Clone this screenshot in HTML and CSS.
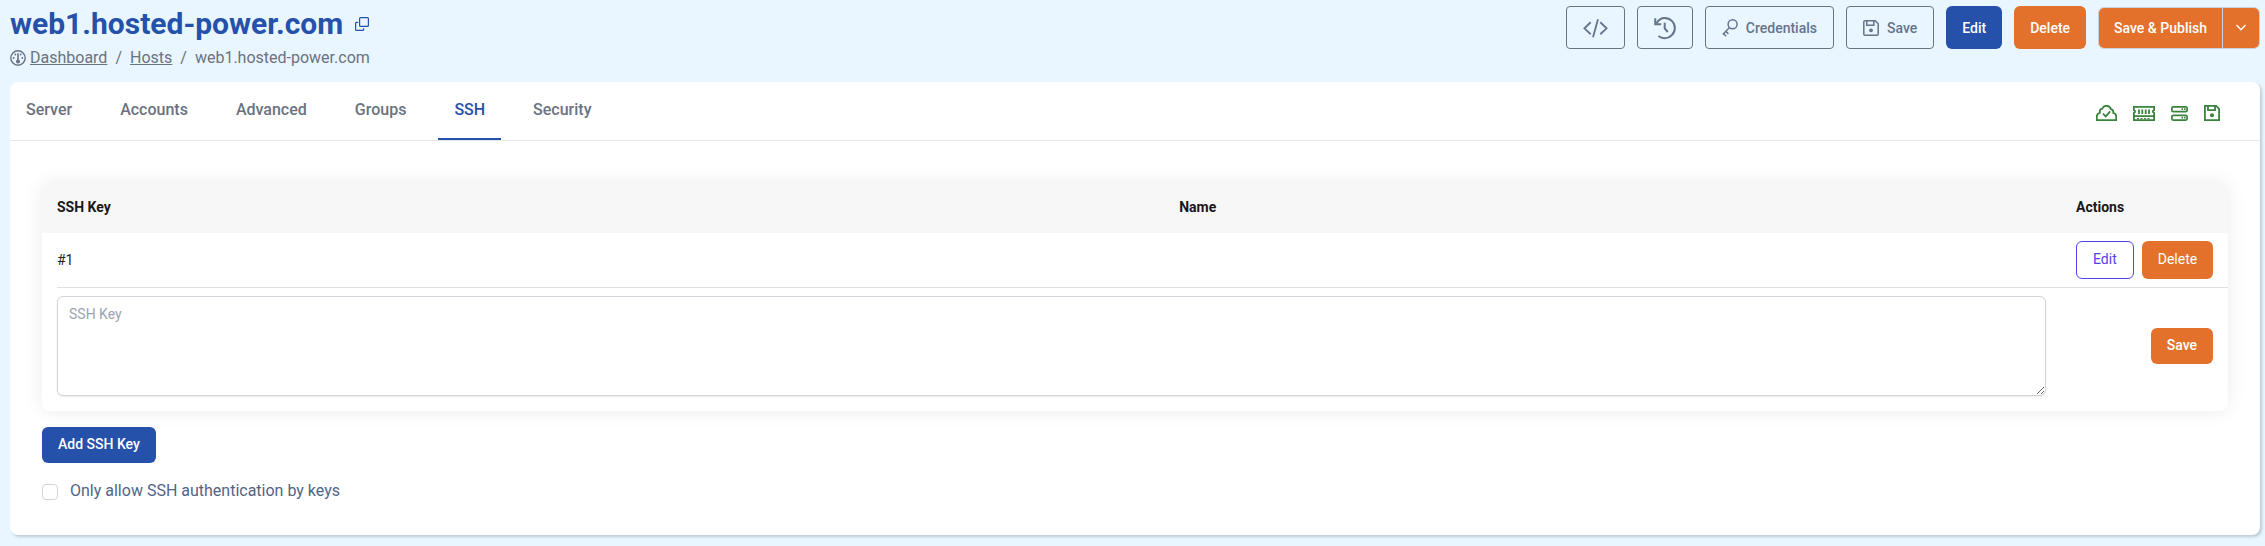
FILE: index.html
```html
<!DOCTYPE html>
<html lang="en">
<head>
<meta charset="utf-8">
<title>web1.hosted-power.com</title>
<link rel="stylesheet" href="styles.css">
</head>
<body>
<header class="page-head">
  <div class="heading">
    <div class="title-row">
      <h1>web1.hosted-power.com</h1>
      <button class="copy" type="button" aria-label="Copy host name">
        <svg width="14" height="14" viewBox="0 0 14 14" fill="none" stroke="currentColor" stroke-width="1.2"><rect x="4.6" y=".6" width="8.8" height="8.8" rx="1"/><path d="M3.200 5.400H1.600a1 1 0 0 0-1 1v6a1 1 0 0 0 1 1h6a1 1 0 0 0 1-1v-1.200"/></svg>
      </button>
    </div>
    <nav class="crumbs" aria-label="Breadcrumb">
      <svg width="16" height="16" viewBox="0 0 16 16" fill="none" stroke="currentColor" stroke-width="1.400"><circle cx="8" cy="8" r="7.200"/><path d="M8 3.200v8" stroke-width="1.600"/><circle cx="8" cy="11.400" r="1.300" fill="currentColor"/><g fill="currentColor" stroke="none"><circle cx="5.300" cy="4.500" r=".9"/><circle cx="10.700" cy="4.500" r=".9"/><circle cx="3.700" cy="8" r=".9"/><circle cx="12.300" cy="8" r=".9"/></g></svg>
      <a href="#">Dashboard</a><span class="sep">/</span><a href="#">Hosts</a><span class="sep">/</span><span>web1.hosted-power.com</span>
    </nav>
  </div>
  <div class="toolbar">
    <button class="btn tall outline" type="button" aria-label="Code">
      <svg width="25" height="20" viewBox="0 0 26 20" fill="none" stroke="currentColor" stroke-width="1.900"><path d="M8 4 1.500 10.300 8 16.500M18 4l6.500 6.300L18 16.500M15.600 1 10.400 19.500"/></svg>
    </button>
    <button class="btn tall outline" type="button" aria-label="History">
      <svg width="22" height="24" viewBox="0 0 23 24" fill="none" stroke="currentColor" stroke-width="2.100"><path d="M2.500 7.200C5 3 8 1.500 11 1.500c6 0 10.800 4.700 10.800 10.500S17 22.600 11 22.600c-2.500 0-4.600-.8-6.400-2.200"/><path d="M1.300 1.800V8h6.200M11.200 6.500v6l3.200 3.700"/></svg>
    </button>
    <button class="btn tall outline" type="button">
      <svg width="16" height="18" viewBox="0 0 16 18" fill="none" stroke="currentColor" stroke-width="1.500"><circle cx="10.600" cy="5.300" r="4.500"/><path d="M7.500 8.600.8 15.500M1.200 14.200l2.900 3M3.700 12.200l2.700 2.700"/></svg>
      Credentials
    </button>
    <button class="btn tall outline" type="button">
      <svg width="16" height="16" viewBox="0 0 16 16" fill="none" stroke="currentColor" stroke-width="1.500"><path d="M2 .8h10.200l3 3V14a1.200 1.200 0 0 1-1.200 1.200H2A1.200 1.200 0 0 1 .8 14V2A1.200 1.200 0 0 1 2 .8zM3.800.8v4.400h7V.8"/><circle cx="8" cy="10.300" r="1.900" fill="currentColor" stroke="none"/></svg>
      Save
    </button>
    <button class="btn tall blue" type="button">Edit</button>
    <button class="btn tall orange" type="button">Delete</button>
    <div class="split">
      <button class="btn orange" type="button">Save &amp; Publish</button>
      <button class="btn orange more" type="button" aria-label="More publish options">
        <svg width="10" height="7" viewBox="0 0 10 7" fill="none" stroke="currentColor" stroke-width="1.400"><path d="M.5 1 5 5.700 9.500 1"/></svg>
      </button>
    </div>
  </div>
</header>
<main class="card">
  <div class="tabbar">
    <nav class="tabs">
      <a href="#">Server</a><a href="#">Accounts</a><a href="#">Advanced</a><a href="#">Groups</a><a href="#" class="active" aria-current="page">SSH</a><a href="#">Security</a>
    </nav>
    <div class="status">
      <svg width="21" height="16" viewBox="0 0 21 16" fill="none" stroke="currentColor" stroke-width="1.800"><path d="M.8 15.200v-3.700c0-2 1.200-3.300 3-3.700C3.500 5.400 4.500 4 6.300 3.700 7 1.800 8.500.8 10.500.8c2.300 0 3.700 1.300 4.300 3.300 1.800.3 2.700 1.600 2.500 3.700 1.900.4 2.900 1.700 2.900 3.700v3.700z"/><path d="m7 8.700 2.700 2.700 4.500-5"/></svg>
      <svg width="22" height="15" viewBox="0 0 22 15" fill="none" stroke="currentColor" stroke-width="1.800"><path d="M.9.900h20.200v3.300c-1.600.4-1.600 2.400 0 2.800v7.100H.9V7c1.600-.4 1.600-2.400 0-2.800zM.8 10.200h20.400M6 3.500v4.500M9.300 3.500v4.500M12.700 3.500v4.500M16 3.500v4.500"/><path d="M4 12.600h14" stroke-dasharray="2 1.500" stroke-width="1.200"/></svg>
      <svg width="17" height="15" viewBox="0 0 17 15" fill="none" stroke="currentColor" stroke-width="1.700"><rect x=".9" y=".9" width="15.200" height="4.800" rx="1.300"/><rect x=".9" y="9.300" width="15.200" height="4.800" rx="1.300"/><path d="M10.500 3.200H12M13 3.200h1.500M10.500 11.700H12M13 11.700h1.500"/></svg>
      <svg width="16" height="16" viewBox="0 0 16 16" fill="none" stroke="currentColor" stroke-width="1.800"><path d="M.9.900h11.300l2.900 2.900v11.300H.9zM4 .8v4.400h7V.8"/><circle cx="8" cy="10.200" r="2" fill="currentColor" stroke="none"/></svg>
    </div>
  </div>
  <div class="content">
    <div class="panel">
      <table>
        <colgroup><col class="c-key"><col><col class="c-act"></colgroup>
        <thead><tr><th scope="col">SSH Key</th><th scope="col">Name</th><th scope="col">Actions</th></tr></thead>
        <tbody>
          <tr>
            <td>#1</td><td></td>
            <td><div class="actions"><button class="btn mid ghost" type="button">Edit</button><button class="btn mid orange" type="button">Delete</button></div></td>
          </tr>
          <tr class="form-row">
            <td colspan="2"><textarea placeholder="SSH Key" aria-label="SSH Key"></textarea></td>
            <td><div class="actions end"><button class="btn orange" type="button">Save</button></div></td>
          </tr>
        </tbody>
      </table>
    </div>
    <button class="btn blue" type="button">Add SSH Key</button>
    <div class="check"><input type="checkbox" id="keys-only"><label for="keys-only">Only allow SSH authentication by keys</label></div>
  </div>
</main>
</body>
</html>
```
FILE: styles.css
```css
* { box-sizing: border-box; }
body {
  margin: 0;
  padding: 6px 5px 11px 10px;
  background: #e9f6ff;
  color: #212529;
  font: 14px/20px Roboto, "Liberation Sans", sans-serif;
}
button, textarea { font: inherit; }
svg { display: block; flex: none; }

.page-head { display: flex; justify-content: space-between; align-items: flex-start; }
.title-row { display: flex; align-items: center; gap: 12px; height: 36px; }
h1 { margin: 0; font-size: 30px; line-height: 36px; font-weight: 700; color: #2551ab; }
.copy { border: 0; padding: 0; background: none; color: #2551ab; }
.crumbs { display: flex; align-items: center; height: 20px; margin-top: 6px; font-size: 16px; color: #6b7280; }
.crumbs svg { margin-right: 4px; }
.crumbs a { color: inherit; text-decoration: underline; }
.sep { margin: 0 8px; }

.toolbar { display: flex; align-items: center; gap: 12px; }
.btn {
  display: inline-flex; align-items: center; justify-content: center; gap: 8px;
  height: 36px; padding: 0 16px 2px;
  border: 0; border-radius: 6px;
  font-size: 14px; line-height: 20px; font-weight: 500;
  white-space: nowrap; cursor: pointer;
}
.tall { height: 43px; padding-bottom: 0; }
.mid { height: 38px; font-weight: 400; }
.outline { border: 1px solid #6b7280; border-radius: 4px; background: transparent; color: #64748b; }
.blue { background: #2551ab; color: #fff; }
.orange { background: #e3712b; color: #fff; }
.ghost { border: 1px solid #4f46e5; background: #fff; color: #4f46e5; }
.split { display: flex; border: 1px solid #cbd0d8; border-radius: 6px; overflow: hidden; }
.split .btn { height: 40px; padding: 0 15px; border-radius: 0; }
.split .more { width: 37px; padding: 0; border-left: 1px solid #cbd0d8; }

.card { margin-top: 14px; background: #fff; border-radius: 8px; box-shadow: 2px 2px 3px #bccdd6; }
.tabbar { display: flex; justify-content: space-between; align-items: stretch; height: 59px; border-bottom: 1px solid #e5e7eb; }
.tabs { display: flex; gap: 16px; }
.tabs a { padding: 16px 16px 0; border-bottom: 2px solid transparent; color: #6b7280; font-size: 16px; line-height: 24px; font-weight: 500; text-decoration: none; }
.tabs .active { color: #2551ab; border-color: #2551ab; }
.status { display: flex; align-items: center; gap: 16px; padding: 4px 40px 0 0; color: #3a833c; }

.content { padding: 42px 32px 32px; }
.panel { margin-bottom: 16px; padding-left: 15px; border-radius: 8px; background: #fff; box-shadow: 0 0 20px rgba(0, 0, 0, .08); overflow: hidden; }
table { width: 100%; table-layout: fixed; border-collapse: separate; border-spacing: 0; }
.c-key { width: 51%; }
.c-act { width: 167px; }
th { height: 50px; padding: 0 15px 2px; background: #f7f7f7; color: #18181b; text-align: left; font-weight: 700; }
th:first-child { box-shadow: -15px 0 0 #f7f7f7; }
td { height: 55px; padding: 0 15px; border-bottom: 1px solid #dee2e6; }
th:first-child, td:first-child { padding-left: 0; }
.form-row td { height: 123px; padding-bottom: 7px; border: 0; vertical-align: middle; }
.form-row td:first-child { padding-top: 8px; padding-bottom: 15px; }
.actions { display: flex; gap: 8px; }
.end { justify-content: flex-end; }
textarea { display: block; width: 100%; height: 100px; padding: 7px 11px; border: 1px solid #d1d5db; border-radius: 6px; box-shadow: 0 1px 2px rgba(0, 0, 0, .08); resize: vertical; }
textarea::placeholder { color: #9ca3af; }

.check { display: flex; align-items: center; gap: 12px; margin-top: 16px; color: #526484; font-size: 16px; line-height: 24px; }
.check input { appearance: none; width: 16px; height: 16px; margin: 2px 0 0; border: 1px solid #d1d5db; border-radius: 4px; background: #fff; }
```
